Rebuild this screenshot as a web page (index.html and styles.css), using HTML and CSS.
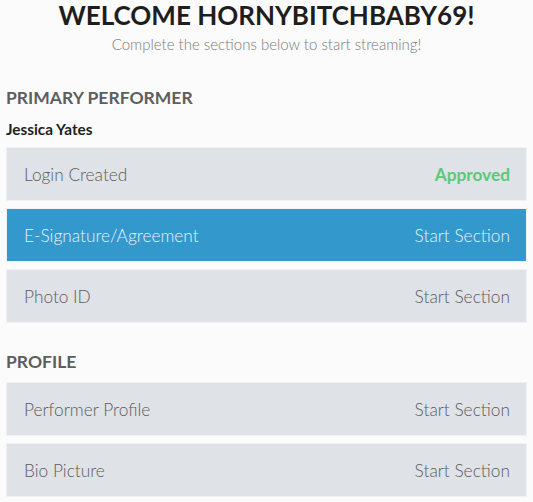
FILE: index.html
```html
<!DOCTYPE html>
<html>
<head>
<meta charset="utf-8">
<link rel="stylesheet" href="styles.css">
</head>
<body>
<div class="page">
  <header class="intro">
    <h1 class="title">WELCOME HORNYBITCHBABY69!</h1>
    <p class="subtitle">Complete the sections below to start streaming!</p>
  </header>

  <section class="group first">
    <h2 class="group-title">PRIMARY PERFORMER</h2>
    <div class="performer">Jessica Yates</div>
    <div class="row"><span class="label">Login Created</span><span class="status approved">Approved</span></div>
    <div class="row active"><span class="label">E-Signature/Agreement</span><span class="status">Start Section</span></div>
    <div class="row"><span class="label">Photo ID</span><span class="status">Start Section</span></div>
  </section>

  <section class="group">
    <h2 class="group-title">PROFILE</h2>
    <div class="row"><span class="label">Performer Profile</span><span class="status">Start Section</span></div>
    <div class="row"><span class="label">Bio Picture</span><span class="status">Start Section</span></div>
  </section>
</div>
</body>
</html>
```

FILE: styles.css
```css
html, body {
  margin: 0;
  padding: 0;
  background: #fbfbfb;
}
body {
  font-family: Lato, "Open Sans", sans-serif;
  color: #222;
}
.page {
  padding: 0 6px;
}
.intro {
  text-align: center;
}
.title {
  margin: 0;
  font-size: 26px;
  font-weight: 700;
  line-height: 30px;
  color: #1e1e1e;
}
.subtitle {
  margin: 5px 0 0;
  font-size: 15px;
  font-weight: 300;
  line-height: 18px;
  color: #7a7a7a;
}
.group-title {
  margin: 0 0 9px;
  font-size: 17.5px;
  font-weight: 700;
  line-height: 22px;
  color: #5e5e5e;
}
.group.first {
  padding-top: 34px;
}
.group.first .group-title {
  margin-bottom: 11px;
}
.group {
  padding-top: 21px;
}
.performer {
  font-size: 15.3px;
  font-weight: 700;
  line-height: 18px;
  color: #1e1e1e;
  margin: 0 0 9px;
}
.row {
  display: flex;
  justify-content: space-between;
  align-items: center;
  height: 52px;
  padding: 0 16px 0 17px;
  margin-bottom: 7px;
  background: #dfe2e6;
  border: 1px solid #eef1f5;
  font-size: 17.3px;
  font-weight: 300;
  color: #5c5c5c;
}
.row.active {
  background: #3398cc;
  color: #e8f3fa;
}
.status.approved {
  color: #5bc97a;
  font-weight: 700;
}
```
